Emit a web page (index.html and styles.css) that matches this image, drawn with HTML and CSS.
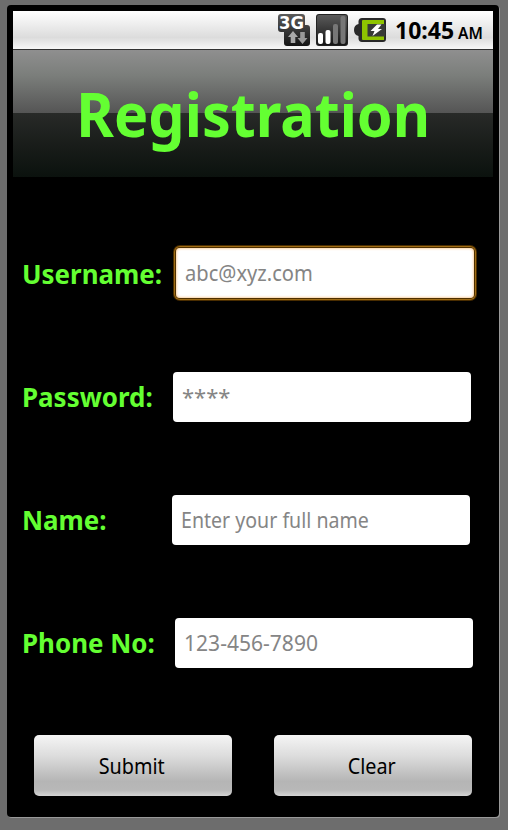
FILE: index.html
```html
<!DOCTYPE html>
<html lang="en">
<head>
<meta charset="utf-8">
<title>Registration</title>
<link rel="stylesheet" href="styles.css">
</head>
<body>
<main class="phone">
  <header class="status">
    <svg class="icon network" viewBox="0 0 32 32">
      <defs><linearGradient id="dark" x1="0" y1="0" x2="0" y2="1"><stop offset="0" stop-color="#5a5a5a"/><stop offset="1" stop-color="#151515"/></linearGradient></defs>
      <path d="M3 0H24Q27 0 27 3V11H29Q32 11 32 14V29Q32 32 29 32H9Q6 32 6 29V18H3Q0 18 0 15V3Q0 0 3 0Z" fill="url(#dark)"/>
      <text class="tech" x="1" y="14.5" textLength="25" lengthAdjust="spacingAndGlyphs">3G</text>
      <path d="M15 17L20 23H17.300V29H12.700V23H10Z" fill="#aaa"/>
      <path d="M24.500 30L19.500 24H22.200V18H26.800V24H29.500Z" fill="#999"/>
    </svg>
    <svg class="icon signal" viewBox="0 0 32 32">
      <rect width="32" height="32" rx="3" fill="#222"/>
      <rect x="1" y="1" width="30" height="30" rx="2" fill="url(#dark)"/>
      <rect x="2" y="19" width="5" height="11" rx="2" fill="#fff"/>
      <rect x="9.5" y="16" width="5" height="14" rx="2" fill="#fff"/>
      <rect x="17" y="10" width="5" height="20" rx="2" fill="#777"/>
      <rect x="24.5" y="2" width="5" height="28" rx="2" fill="#777"/>
    </svg>
    <svg class="icon battery" viewBox="0 0 32 32">
      <path d="M8 4H29Q32 4 32 7V25Q32 28 29 28H8Q5 28 4.500 25V22Q0 21 0 16Q0 11 4.500 10V7Q5 4 8 4Z" fill="#292929"/>
      <path d="M9 6H30V10H14V22H30V26H9Q8 26 8 25V7Q8 6 9 6Z" fill="#8fc400"/>
      <rect x="13.500" y="10" width="17.500" height="12.500" fill="#383a36"/>
      <path d="M23 10.500L16.500 17H20.500L18.500 22L28 15H24L27.500 10.500Z" fill="#fff"/>
    </svg>
    <span class="clock">10:45</span><span class="ampm">AM</span>
  </header>
  <div class="banner"><h1>Registration</h1></div>
  <form class="form">
    <div class="row username"><label>Username:</label><div class="field focused"><span>abc@xyz.com</span></div></div>
    <div class="row password"><label>Password:</label><div class="field"><span>****</span></div></div>
    <div class="row name"><label>Name:</label><div class="field"><span>Enter your full name</span></div></div>
    <div class="row phone-no"><label>Phone No:</label><div class="field"><span>123-456-7890</span></div></div>
    <div class="actions">
      <button type="button"><span>Submit</span></button>
      <button type="button"><span>Clear</span></button>
    </div>
  </form>
</main>
</body>
</html>
```

FILE: styles.css
```css
* { box-sizing: border-box; }
body {
  margin: 0;
  height: 830px;
  overflow: hidden;
  padding: 5px 9px 0 7px;
  background: #6d6d6d;
  font-family: "Noto Sans", "Open Sans", sans-serif;
}
.phone {
  height: 812px;
  padding: 6px;
  background: #000;
  border-radius: 4px;
  box-shadow: 1px 1px 0 #999;
}
.status {
  display: flex;
  height: 39px;
  padding: 3px 9px 0 265px;
  background: linear-gradient(#fff, #dcdcdc 70%, #e0e0e0 74%, #f8f8f8);
  border-bottom: 1px solid #333;
  white-space: nowrap;
}
.icon { width: 32px; height: 32px; flex: none; margin-right: 6px; }
.tech { font: bold 17px "DejaVu Sans", sans-serif; fill: #fff; }
.clock, .ampm { color: #000; }
.clock { width: 63px; margin-left: 3px; font-size: 23px; font-weight: 700; line-height: 33px; }
.ampm { font-size: 15.5px; font-weight: 600; line-height: 38px; }
.banner {
  display: flex;
  justify-content: center;
  height: 127px;
  background: linear-gradient(#8f8f8f, #7b7e7b 20%, #555 49.500%, #282a28 49.500%, #171b18 78%, #0b120e);
}
h1 {
  margin: 0;
  color: #64ff32;
  font-size: 61.5px;
  line-height: 126px;
  font-weight: 700;
  white-space: nowrap;
  transform: scaleX(.935);
}
.form { padding-top: 69px; }
.row { display: flex; align-items: center; height: 54px; padding-left: 9px; }
.row + .row { margin-top: 69px; }
.row.password { margin-top: 70px; }
label {
  width: 151px;
  flex: none;
  color: #64ff32;
  font-size: 27px;
  font-weight: 700;
  line-height: 50px;
  white-space: nowrap;
  transform: scaleX(.96);
  transform-origin: left;
}
.username label { padding-top: 2px; }
.field {
  width: 298px;
  height: 50px;
  padding-left: 9px;
  border-radius: 4px;
  background: #fff;
  color: #858585;
  font-size: 22px;
  line-height: 49px;
  white-space: nowrap;
}
.field span, button span { display: inline-block; transform-origin: left; }
.focused {
  margin-left: 3px;
  line-height: 48px;
  box-shadow: inset 0 0 3px #f5a850, 0 0 0 1px #4e3000, 0 0 0 2px #a06c14, 0 0 0 3px #4a2d00;
}
.username .field span { transform: scaleX(.915); }
.name .field span { transform: scaleX(.89); }
.phone-no .field span { transform: scaleX(.957); }
.name label { width: 150px; }
.phone-no label { width: 153px; }
.actions { display: flex; gap: 42px; padding: 65px 0 0 21px; }
button {
  width: 198px;
  height: 61px;
  padding: 0 2px 0 0;
  border: 0;
  border-radius: 5px;
  background: linear-gradient(#f5f5f5, #dcdcdc 35%, #b5b5b5 76%, #b8b8b8 90%, #d4d4d4);
  color: #000;
  font: 22px "Noto Sans", sans-serif;
  line-height: 61px;
}
button span { transform: scaleX(.9); transform-origin: center; }
```
